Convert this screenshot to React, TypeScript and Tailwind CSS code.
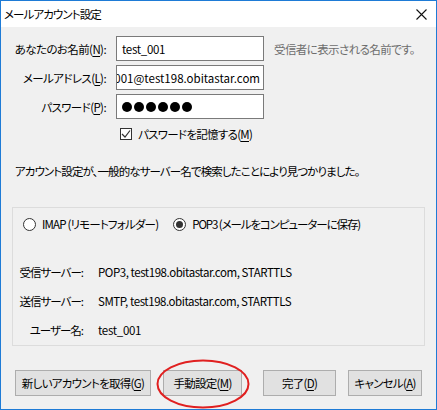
import React from "react";

const U = ({ c }: { c: string }) => <span className="underline underline-offset-[2px]">{c}</span>;

function Btn({ w, children }: { w: string; children: React.ReactNode }) {
  return (
    <div className={`${w} h-[26px] border border-[#adadad] bg-[#e1e1e1] flex items-center justify-center whitespace-nowrap text-black`}>
      {children}
    </div>
  );
}

export default function App() {
  return (
    <div className="w-[437px] h-[410px] border border-[#1e7bd6] bg-[#f0f0f0] flex flex-col relative font-['Noto_Sans_CJK_JP',sans-serif] [font-feature-settings:'palt'] text-[11.5px] text-black leading-[16px] overflow-hidden whitespace-nowrap">
      {/* title bar */}
      <div className="h-[26px] bg-white flex items-center justify-between pl-[3px] pr-[9px] shrink-0">
        <span className="tracking-[-0.9px]">メールアカウント設定</span>
        <svg width="11" height="11" viewBox="0 0 11 11">
          <path d="M0.5 0.5 L10.5 10.5 M10.5 0.5 L0.5 10.5" stroke="#111" strokeWidth="1.1" />
        </svg>
      </div>

      {/* form */}
      <div className="flex flex-col gap-[4px] pt-[9px]">
        <div className="flex items-center">
          <div className="w-[105px] text-right tracking-[-0.6px]">あなたのお名前(<U c="N" />):</div>
          <div className="ml-[10px] w-[148px] h-[25px] bg-white border border-[#7a7a7a] flex items-center px-[5px] tracking-[-0.3px]">test_001</div>
          <div className="ml-[10px] text-[#6d6d6d] tracking-[-0.6px]">受信者に表示される名前です。</div>
        </div>
        <div className="flex items-center">
          <div className="w-[105px] text-right tracking-[-0.6px]">メールアドレス(<U c="L" />):</div>
          <div className="ml-[10px] w-[148px] h-[25px] bg-white border border-[#7a7a7a] flex items-center justify-end overflow-hidden pr-[3px]">
            <span>test_001@test198.obitastar.com</span>
          </div>
        </div>
        <div className="flex items-center">
          <div className="w-[105px] text-right tracking-[-0.6px]">パスワード(<U c="P" />):</div>
          <div className="ml-[10px] w-[148px] h-[25px] bg-white border border-[#7a7a7a] flex items-center gap-[2px] pl-[5px]">
            {[0, 1, 2, 3, 4, 5].map((i) => (
              <div key={i} className="w-[10px] h-[10px] rounded-full bg-black" />
            ))}
          </div>
        </div>
        <div className="flex items-center ml-[119px] mt-[3px]">
          <div className="w-[12px] h-[12px] border border-[#333] bg-white flex items-center justify-center">
            <svg width="10" height="10" viewBox="0 0 10 10">
              <path d="M1 5 L4 8 L9 1.5" stroke="#333" strokeWidth="1.2" fill="none" />
            </svg>
          </div>
          <span className="ml-[6px] tracking-[-0.7px]">パスワードを記憶する(<U c="M" />)</span>
        </div>
      </div>

      <div className="ml-[14px] mt-[21px] tracking-[-0.9px]">アカウント設定が、一般的なサーバー名で検索したことにより見つかりました。</div>

      {/* group box */}
      <div className="ml-[11px] mt-[28px] w-[413px] h-[139px] border border-[#dcdcdc] flex flex-col shrink-0">
        <div className="flex items-center mt-[8px] ml-[10px]">
          <div className="w-[13px] h-[13px] rounded-full border border-[#333] bg-white" />
          <span className="ml-[6px] tracking-[-0.8px]">IMAP (リモートフォルダー)</span>
          <div className="ml-[15px] w-[13px] h-[13px] rounded-full border border-[#333] bg-white flex items-center justify-center">
            <div className="w-[7px] h-[7px] rounded-full bg-[#333]" />
          </div>
          <span className="ml-[6px] tracking-[-1.1px]">POP3 (メールをコンピューターに保存)</span>
        </div>
        <div className="flex flex-col gap-[13px] mt-[32px]">
          <div className="flex items-center">
            <div className="w-[70px] text-right tracking-[-1px]">受信サーバー:</div>
            <div className="ml-[15px] tracking-[-0.45px]">POP3, test198.obitastar.com, STARTTLS</div>
          </div>
          <div className="flex items-center">
            <div className="w-[70px] text-right tracking-[-1px]">送信サーバー:</div>
            <div className="ml-[15px] tracking-[-0.45px]">SMTP, test198.obitastar.com, STARTTLS</div>
          </div>
          <div className="flex items-center">
            <div className="w-[70px] text-right tracking-[-1px]">ユーザー名:</div>
            <div className="ml-[15px] tracking-[-0.3px]">test_001</div>
          </div>
        </div>
      </div>

      {/* buttons */}
      <div className="flex mt-[24px] ml-[14px] tracking-[-0.7px]">
        <Btn w="w-[136px]">新しいアカウントを取得(<U c="G" />)</Btn>
        <div className="ml-[12px]">
          <Btn w="w-[79px]">手動設定(<U c="M" />)</Btn>
        </div>
        <div className="ml-[21px]">
          <Btn w="w-[73px]">完了(<U c="D" />)</Btn>
        </div>
        <div className="ml-[12px]">
          <Btn w="w-[74px]">キャンセル(<U c="A" />)</Btn>
        </div>
      </div>

      {/* red annotation ellipse */}
      <svg className="absolute left-[154px] top-[357px]" width="96" height="52" viewBox="0 0 96 52">
        <ellipse cx="48" cy="26" rx="45.5" ry="23.5" fill="none" stroke="#e02020" strokeWidth="2" />
      </svg>
    </div>
  );
}
